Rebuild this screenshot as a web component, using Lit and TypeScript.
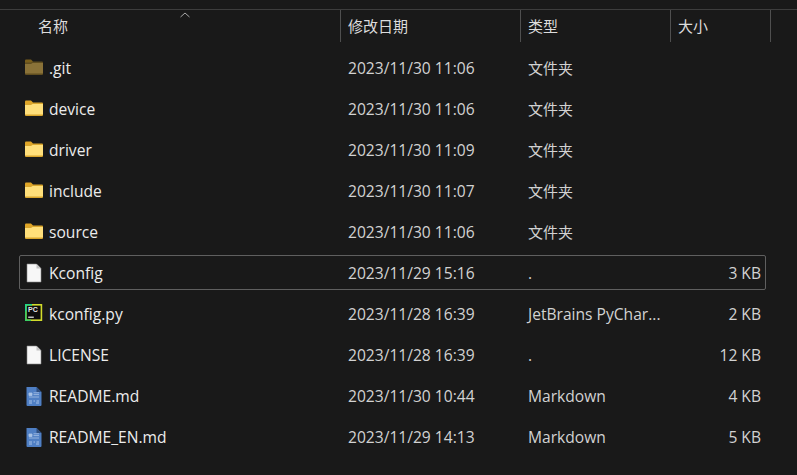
import { LitElement, html, css, svg } from 'lit';
import { customElement } from 'lit/decorators.js';

type Kind = 'git' | 'folder' | 'file' | 'py' | 'md';

interface Entry {
  name: string;
  date: string;
  type: string;
  size: string;
  kind: Kind;
  selected?: boolean;
}

const entries: Entry[] = [
  { name: '.git', date: '2023/11/30 11:06', type: '文件夹', size: '', kind: 'git' },
  { name: 'device', date: '2023/11/30 11:06', type: '文件夹', size: '', kind: 'folder' },
  { name: 'driver', date: '2023/11/30 11:09', type: '文件夹', size: '', kind: 'folder' },
  { name: 'include', date: '2023/11/30 11:07', type: '文件夹', size: '', kind: 'folder' },
  { name: 'source', date: '2023/11/30 11:06', type: '文件夹', size: '', kind: 'folder' },
  { name: 'Kconfig', date: '2023/11/29 15:16', type: '.', size: '3 KB', kind: 'file', selected: true },
  { name: 'kconfig.py', date: '2023/11/28 16:39', type: 'JetBrains PyChar...', size: '2 KB', kind: 'py' },
  { name: 'LICENSE', date: '2023/11/28 16:39', type: '.', size: '12 KB', kind: 'file' },
  { name: 'README.md', date: '2023/11/30 10:44', type: 'Markdown', size: '4 KB', kind: 'md' },
  { name: 'README_EN.md', date: '2023/11/29 14:13', type: 'Markdown', size: '5 KB', kind: 'md' },
];

function folderIcon(tab: string, body: string, edge: string) {
  return svg`<svg class="icon" width="20" height="20" viewBox="0 0 20 20">
    <path d="M1 2.5 Q1 1.5 2 1.5 H7 L9 3.5 V5 H1 Z" fill=${tab} />
    <path d="M1 4.5 H7 L8.5 3.5 H18 Q19 3.5 19 4.5 V16 Q19 17 18 17 H2 Q1 17 1 16 Z" fill=${edge} />
    <path d="M1 6 H7 L8.5 5 H19 V15 Q19 15.5 18.5 15.5 H1.5 Q1 15.5 1 15 Z" fill=${body} />
  </svg>`;
}

function fileIcon() {
  return svg`<svg class="icon" width="20" height="20" viewBox="0 0 20 20">
    <path d="M3 1 H12.5 L17 5.5 V19 H3 Z" fill="#f7f7f7" stroke="#8c8c8c" stroke-width="0.6" />
    <path d="M12.5 1 V5.5 H17 Z" fill="#c4c4c4" />
  </svg>`;
}

function pyIcon() {
  return svg`<svg class="icon" width="20" height="20" viewBox="0 0 20 20">
    <rect x="1.8" y="0.8" width="15.6" height="15.4" fill="#0d0d0d" stroke="#d2dc2c" stroke-width="1.6" />
    <path d="M1 0 H8 V1.6 H2.6 V7 H1 Z" fill="#21d789" />
    <path d="M1 7 H2.6 V15.4 H7 V17 H1 Z" fill="#3ccf63" />
    <text x="4" y="8" font-size="7" font-weight="700" fill="#e8e8e8" font-family="Liberation Sans, sans-serif">PC</text>
    <rect x="4.2" y="12.6" width="5.6" height="1.2" fill="#f0f0f0" />
  </svg>`;
}

function mdIcon() {
  return svg`<svg class="icon" width="20" height="20" viewBox="0 0 20 20">
    <path d="M2.5 1 H12.5 L17.5 6 V19 Q17.5 20 16.5 20 H3.5 Q2.5 20 2.5 19 Z" fill="#4f7fc4" />
    <path d="M12.5 1 V6 H17.5 Z" fill="#2f4f80" />
    <path d="M5 7 H8 V9.5 H5 Z M9.5 6.8 H15 M9.5 8.6 H15 M5 11 H15" fill="#a9c3e6" stroke="#a9c3e6" stroke-width="0.8" />
    <path d="M5 15 H8 M9.5 15 H11 M12.5 15 H15 M5 17 H8 M12 17 H15" stroke="#a9c3e6" stroke-width="1" />
  </svg>`;
}

@customElement('app-root')
export class AppRoot extends LitElement {
  static styles = css`
    :host {
      display: block;
      width: 797px;
      height: 475px;
      overflow: hidden;
      background: #191919;
      font-family: 'Open Sans', 'Noto Sans CJK SC', sans-serif;
      font-size: 15.6px;
      color: #ececec;
    }

    .header {
      position: relative;
      display: grid;
      grid-template-columns: 341px 180px 150px 100px;
      height: 32px;
      margin-top: 9px;
      border-top: 1px solid #3d3d3d;
    }

    .head-cell {
      display: flex;
      align-items: center;
      height: 32px;
      padding: 0 0 2px 7px;
      box-sizing: border-box;
      border-right: 1px solid #4f4f4f;
      color: #dcdcdc;
      font-size: 15px;
    }

    .head-cell.first {
      padding-left: 38px;
    }

    .sort {
      position: absolute;
      left: 180px;
      top: 2px;
    }

    .list {
      display: flex;
      flex-direction: column;
      gap: 6px;
      padding: 8px 0 0 19px;
    }

    .row {
      display: grid;
      grid-template-columns: 321px 180px 150px 90px;
      align-items: center;
      width: 747px;
      height: 35px;
      box-sizing: border-box;
      border: 1px solid transparent;
      border-radius: 2px;
    }

    .row.selected {
      border-color: #5f5f5f;
    }

    .name {
      display: flex;
      align-items: center;
      gap: 5px;
      padding-left: 4px;
      white-space: nowrap;
    }

    .icon {
      flex: none;
    }

    .date {
      padding-left: 7px;
      color: #d2d2d2;
    }

    .type {
      padding-left: 7px;
      color: #d2d2d2;
      white-space: nowrap;
    }

    .type.cjk {
      font-size: 15px;
    }

    .size {
      text-align: right;
      color: #d2d2d2;
    }
  `;

  renderIcon(kind: Kind) {
    switch (kind) {
      case 'git':
        return folderIcon('#7a5f1c', '#8a7238', '#5f4d1f');
      case 'folder':
        return folderIcon('#e0a526', '#ffdf7a', '#d9a52c');
      case 'py':
        return pyIcon();
      case 'md':
        return mdIcon();
      default:
        return fileIcon();
    }
  }

  render() {
    return html`
      <div class="header">
        <div class="head-cell first">名称</div>
        <div class="head-cell">修改日期</div>
        <div class="head-cell">类型</div>
        <div class="head-cell">大小</div>
        <svg class="sort" width="10" height="6" viewBox="0 0 10 6">
          <path d="M0.5 5 L5 1 L9.5 5" fill="none" stroke="#a8a8a8" stroke-width="1" />
        </svg>
      </div>
      <div class="list">
        ${entries.map(
          (e) => html`
            <div class="row ${e.selected ? 'selected' : ''}">
              <div class="name">${this.renderIcon(e.kind)}<span>${e.name}</span></div>
              <div class="date">${e.date}</div>
              <div class="type ${e.kind === 'git' || e.kind === 'folder' ? 'cjk' : ''}">${e.type}</div>
              <div class="size">${e.size}</div>
            </div>
          `,
        )}
      </div>
    `;
  }
}
